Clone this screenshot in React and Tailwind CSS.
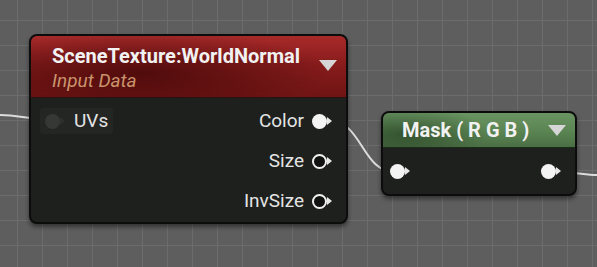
import React from 'react';

function Pin({ filled, dim }) {
  // pin = circle + little arrow on its right
  return (
    <div className="flex items-center">
      <div
        className={
          dim
            ? 'w-[15px] h-[15px] rounded-full bg-[#363836]'
            : filled
            ? 'w-[15px] h-[15px] rounded-full bg-[#f4f4f4]'
            : 'w-[15px] h-[15px] rounded-full border-[2.5px] border-[#f0f0f0] bg-[#111111]'
        }
      />
      <div
        className={
          dim
            ? 'w-0 h-0 border-y-[4px] border-y-transparent border-l-[5px] border-l-[#2e302e]'
            : 'w-0 h-0 border-y-[4px] border-y-transparent border-l-[5px] border-l-[#e8e8e8]'
        }
      />
    </div>
  );
}

function Caret() {
  return (
    <div className="w-0 h-0 border-x-[9px] border-x-transparent border-t-[11px] border-t-[#d6d6d6]" />
  );
}

export default function App() {
  return (
    <div
      className="relative w-[597px] h-[267px] overflow-hidden bg-[#5e5e5e] bg-[linear-gradient(to_right,#6c6c6c_1px,transparent_1px),linear-gradient(to_bottom,#6c6c6c_1px,transparent_1px)] [background-size:25px_25px] [background-position:17px_20px]"
      style={{ fontFamily: 'Roboto, "Liberation Sans", sans-serif' }}
    >
      {/* wires */}
      <svg className="absolute inset-0" width="597" height="267" viewBox="0 0 597 267" fill="none">
        <path d="M0 115 C 20 115, 25 119, 46 119" stroke="#dcdcdc" strokeWidth="2" />
        <path d="M330 121 C 362 121, 362 172, 395 172" stroke="#dcdcdc" strokeWidth="2" />
        <path d="M558 172 C 575 172, 585 175, 597 175" stroke="#dcdcdc" strokeWidth="2" />
      </svg>

      {/* SceneTexture node */}
      <div className="absolute left-[29px] top-[34px] w-[319px] h-[190px] rounded-[8px] border-2 border-[#0c0c0c] bg-[#1e201e] overflow-hidden shadow-[0_3px_4px_rgba(0,0,0,0.45)] flex flex-col">
        <div className="relative h-[62px] shrink-0 bg-[linear-gradient(to_bottom,#a82a2a_0%,#891c1c_45%,#701414_100%)] border-b border-[#2a1212]">
          <div className="absolute inset-0 bg-[radial-gradient(ellipse_60%_70%_at_35%_60%,rgba(40,0,0,0.55),transparent)]" />
          <div className="relative flex justify-between pl-[21px] pr-[9px] pt-[7px]">
            <div className="flex flex-col">
              <span className="text-[20px] leading-[26px] font-bold text-[#f2f2f2]">SceneTexture:WorldNormal</span>
              <span className="text-[19px] leading-[24px] italic text-[#c9946c]">Input Data</span>
            </div>
            <div className="pt-[17px]">
              <Caret />
            </div>
          </div>
        </div>
        <div className="flex justify-between pt-[3px]">
          <div className="flex flex-col pl-[9px]">
            <div className="h-[40px] flex items-center">
              <div className="flex items-center gap-[9px] bg-[#242624] rounded-[3px] pl-[5px] pr-[5px] h-[26px]">
                <Pin dim />
                <span className="text-[19px] text-[#e4e4e4]">UVs</span>
              </div>
            </div>
          </div>
          <div className="flex flex-col items-end pr-[14px]">
            {['Color', 'Size', 'InvSize'].map((label, i) => (
              <div key={label} className="h-[40px] flex items-center gap-[8px]">
                <span className="text-[19px] text-[#e4e4e4]">{label}</span>
                <Pin filled={i === 0} />
              </div>
            ))}
          </div>
        </div>
      </div>

      {/* Mask node */}
      <div className="absolute left-[381px] top-[111px] w-[196px] h-[85px] rounded-[8px] border-2 border-[#0c0c0c] bg-[#1e201e] overflow-hidden shadow-[0_3px_4px_rgba(0,0,0,0.45)] flex flex-col">
        <div className="relative h-[35px] shrink-0 bg-[linear-gradient(to_bottom,#6a9462_0%,#5a8452_55%,#4a6e44_100%)] border-b border-[#1c2a1a]">
          <div className="absolute inset-0 bg-[radial-gradient(ellipse_45%_80%_at_10%_60%,rgba(10,30,10,0.45),transparent)]" />
          <div className="relative flex justify-between items-center pl-[19px] pr-[9px] h-full">
            <span className="text-[20px] font-bold text-[#f2f2f2]">Mask ( R G B )</span>
            <Caret />
          </div>
        </div>
        <div className="flex justify-between items-center pl-[7px] pr-[14px] h-[48px]">
          <Pin filled />
          <Pin filled />
        </div>
      </div>
    </div>
  );
}
